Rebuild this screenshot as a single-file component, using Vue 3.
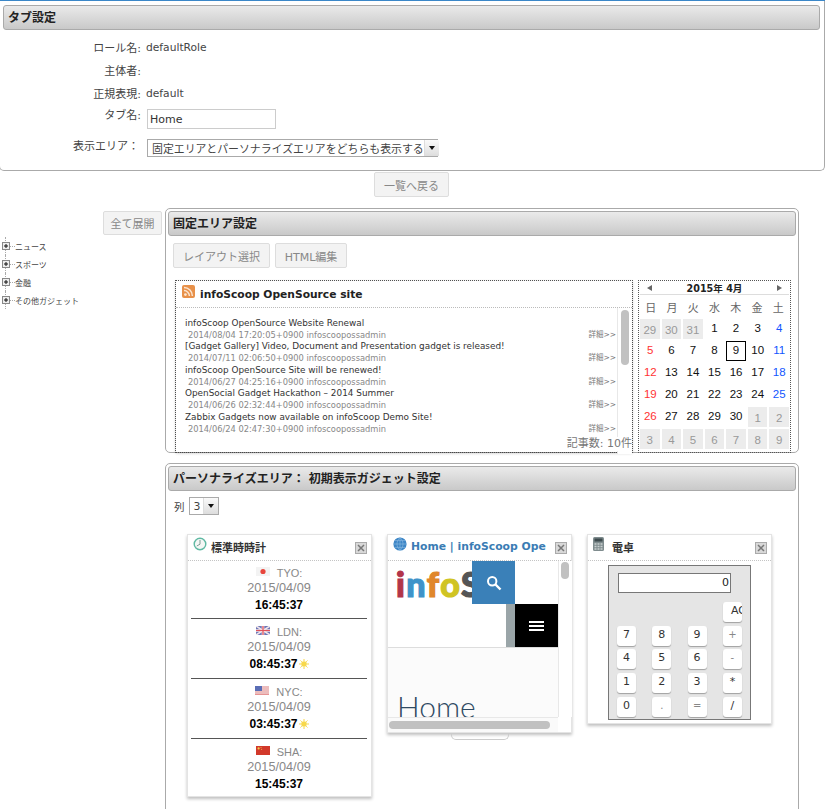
<script setup>
const treeItems = ['ニュース', 'スポーツ', '金融', 'その他ガジェット']

const feeds = [
  { title: 'infoScoop OpenSource Website Renewal', meta: '2014/08/04 17:20:05+0900 infoscoopossadmin' },
  { title: '[Gadget Gallery] Video, Document and Presentation gadget is released!', meta: '2014/07/11 02:06:50+0900 infoscoopossadmin' },
  { title: 'infoScoop OpenSource Site will be renewed!', meta: '2014/06/27 04:25:16+0900 infoscoopossadmin' },
  { title: 'OpenSocial Gadget Hackathon – 2014 Summer', meta: '2014/06/26 02:32:44+0900 infoscoopossadmin' },
  { title: 'Zabbix Gadgets now available on infoScoop Demo Site!', meta: '2014/06/24 02:47:30+0900 infoscoopossadmin' }
]

const weekdays = ['日', '月', '火', '水', '木', '金', '土']
const days = [
  [29, 'o'], [30, 'o'], [31, 'o'], [1, ''], [2, ''], [3, ''], [4, 'sat'],
  [5, 'sun'], [6, ''], [7, ''], [8, ''], [9, 'today'], [10, ''], [11, 'sat'],
  [12, 'sun'], [13, ''], [14, ''], [15, ''], [16, ''], [17, ''], [18, 'sat'],
  [19, 'sun'], [20, ''], [21, ''], [22, ''], [23, ''], [24, ''], [25, 'sat'],
  [26, 'sun'], [27, ''], [28, ''], [29, ''], [30, ''], [1, 'o'], [2, 'o'],
  [3, 'o'], [4, 'o'], [5, 'o'], [6, 'o'], [7, 'o'], [8, 'o'], [9, 'o']
]

const clocks = [
  { city: 'TYO', flag: 'jp', time: '16:45:37', sun: false },
  { city: 'LDN', flag: 'uk', time: '08:45:37', sun: true },
  { city: 'NYC', flag: 'us', time: '03:45:37', sun: true },
  { city: 'SHA', flag: 'cn', time: '15:45:37', sun: false }
]

const calcKeys = ['7', '8', '9', '+', '4', '5', '6', '-', '1', '2', '3', '*', '0', '.', '=', '/']
const softKeys = ['+', '-', '.', '=']
</script>

<template>
  <div class="page">
    <!-- tab settings -->
    <section class="settings">
      <h2 class="bar">タブ設定</h2>
      <div class="form">
        <label>ロール名:</label><span class="val">defaultRole</span>
        <label>主体者:</label><span class="val"></span>
        <label>正規表現:</label><span class="val">default</span>
        <label class="lbl-tab">タブ名:</label><input class="tabname" value="Home" />
        <label class="lbl-area">表示エリア：</label>
        <div class="select wide">
          <span>固定エリアとパーソナライズエリアをどちらも表示する</span>
          <i class="arrow"></i>
        </div>
      </div>
    </section>

    <div class="back"><button class="btn back-btn">一覧へ戻る</button></div>

    <div class="main">
      <aside class="side">
        <div class="expand"><button class="btn expand-btn">全て展開</button></div>
        <ul class="tree">
          <li v-for="item in treeItems" :key="item">
            <svg width="8" height="8" viewBox="0 0 8 8">
              <rect x=".5" y=".5" width="7" height="7" fill="#eee" stroke="#888" />
              <path d="M2 4h4M4 2v4" stroke="#111" />
            </svg>
            <i class="dots"></i>{{ item }}
          </li>
        </ul>
      </aside>

      <div class="content">
        <!-- fixed area -->
        <section class="panel fixed">
          <h2 class="bar">固定エリア設定</h2>
          <div class="tools">
            <button class="btn tool1">レイアウト選択</button>
            <button class="btn tool2">HTML編集</button>
          </div>
          <div class="fixed-row">
            <div class="slot rss-slot">
              <div class="gadget rss">
                <div class="rss-head">
                  <svg class="rss-icon" width="13" height="13" viewBox="0 0 13 13">
                    <rect width="13" height="13" rx="2" fill="#e8914a" />
                    <circle cx="3.4" cy="9.6" r="1.4" fill="#fbe6d2" />
                    <path d="M2 5.6a5.4 5.4 0 0 1 5.4 5.4M2 2.6a8.4 8.4 0 0 1 8.4 8.4" fill="none" stroke="#fbe6d2" stroke-width="1.5" />
                  </svg>
                  <span>infoScoop OpenSource site</span>
                </div>
                <div class="rss-body">
                  <ul class="feeds">
                    <li v-for="f in feeds" :key="f.meta">
                      <div class="f-title">{{ f.title }}</div>
                      <div class="f-meta"><span>{{ f.meta }}</span><span class="more">詳細&gt;&gt;</span></div>
                    </li>
                  </ul>
                  <div class="vscroll"><b class="thumb"></b></div>
                  <div class="count">記事数: 10件</div>
                </div>
              </div>
            </div>
            <div class="slot cal-slot">
              <div class="cal-head">
                <i class="tri left"></i><span>2015年 4月</span><i class="tri right"></i>
              </div>
              <div class="cal-week">
                <span v-for="w in weekdays" :key="w">{{ w }}</span>
              </div>
              <div class="cal-grid">
                <span v-for="(d, i) in days" :key="i" class="day" :class="d[1]">{{ d[0] }}</span>
              </div>
            </div>
          </div>
        </section>

        <!-- personalize area -->
        <section class="panel personal">
          <h2 class="bar">パーソナライズエリア： 初期表示ガジェット設定</h2>
          <div class="cols">
            <span>列</span>
            <div class="select small"><span>3</span><i class="arrow"></i></div>
          </div>
          <div class="gadgets">
            <!-- clock -->
            <div class="gadget g-card">
              <div class="g-head">
                <svg class="g-icon" width="14" height="14" viewBox="0 0 14 14">
                  <circle cx="7" cy="7" r="5.8" fill="#f4f7f5" stroke="#5fb9a3" stroke-width="1.4" />
                  <path d="M7 3v4.2L3.8 9" fill="none" stroke="#7c9c94" stroke-width="1" />
                </svg>
                <span class="g-title">標準時時計</span>
                <svg class="g-close" width="12" height="12" viewBox="0 0 12 12">
                  <rect x=".5" y=".5" width="11" height="11" fill="#d8d8d8" stroke="#aaa" />
                  <path d="M3 3l6 6M9 3l-6 6" stroke="#777" stroke-width="1.5" />
                </svg>
              </div>
              <div class="clocks">
                <div v-for="c in clocks" :key="c.city" class="clock">
                  <div class="city">
                    <svg class="flag" width="14" height="9" viewBox="0 0 14 9">
                      <template v-if="c.flag === 'jp'">
                        <rect width="14" height="9" fill="#f3f3f3" />
                        <circle cx="7" cy="4.5" r="2.6" fill="#e8453c" />
                      </template>
                      <template v-else-if="c.flag === 'uk'">
                        <rect width="14" height="9" fill="#6c77b8" />
                        <path d="M0 0l14 9M14 0L0 9" stroke="#f1e6ea" stroke-width="1.6" />
                        <path d="M7 0v9M0 4.5h14" stroke="#f6dede" stroke-width="2.6" />
                        <path d="M7 0v9M0 4.5h14" stroke="#e0505a" stroke-width="1.2" />
                      </template>
                      <template v-else-if="c.flag === 'us'">
                        <rect width="14" height="9" fill="#f3eeee" />
                        <path d="M0 1h14M0 3h14M0 5h14M0 7h14M0 8.6h14" stroke="#e58a8a" />
                        <rect width="7" height="5" fill="#5a6db5" />
                      </template>
                      <template v-else>
                        <rect width="14" height="9" fill="#d2392b" />
                        <circle cx="2.6" cy="2.4" r="1.1" fill="#f2d14a" />
                        <circle cx="5" cy="1.4" r=".5" fill="#f2d14a" />
                        <circle cx="5.6" cy="3.2" r=".5" fill="#f2d14a" />
                      </template>
                    </svg>
                    <span>{{ c.city }}:</span>
                  </div>
                  <div class="date">2015/04/09</div>
                  <div class="time">
                    {{ c.time }}<svg v-if="c.sun" class="sun" width="10" height="10" viewBox="0 0 10 10">
                      <circle cx="5" cy="5" r="2.8" fill="#f7d84a" />
                      <path d="M5 0v2M5 8v2M0 5h2M8 5h2M1.5 1.5l1.3 1.3M7.2 7.2l1.3 1.3M8.5 1.5L7.2 2.8M2.8 7.2L1.5 8.5" stroke="#f7d84a" stroke-width="1" />
                    </svg>
                  </div>
                </div>
              </div>
            </div>

            <!-- web page -->
            <div class="g-wrap">
              <div class="gadget g-card">
                <div class="g-head">
                  <svg class="g-icon" width="14" height="14" viewBox="0 0 14 14">
                    <circle cx="7" cy="7" r="6.6" fill="#3d86c6" />
                    <path d="M1 7h12M7 .6v12.8M2 3.6h10M2 10.4h10M7 .6c-4 3.6-4 9.2 0 12.8M7 .6c4 3.6 4 9.2 0 12.8" fill="none" stroke="#8fbce2" stroke-width=".6" />
                  </svg>
                  <span class="g-title link">Home | infoScoop Ope</span>
                  <svg class="g-close" width="12" height="12" viewBox="0 0 12 12">
                    <rect x=".5" y=".5" width="11" height="11" fill="#d8d8d8" stroke="#aaa" />
                    <path d="M3 3l6 6M9 3l-6 6" stroke="#777" stroke-width="1.5" />
                  </svg>
                </div>
                <div class="web">
                  <div class="web-view">
                    <div class="web-top">
                      <div class="logo"><span class="l-i">i</span><span class="l-n">n</span><span class="l-f">f</span><span class="l-o">o</span><span class="l-s">S</span></div>
                      <div class="web-btns">
                        <div class="search">
                          <svg width="16" height="16" viewBox="0 0 16 16">
                            <circle cx="6.2" cy="6.2" r="4.2" fill="none" stroke="#fff" stroke-width="2" />
                            <path d="M9.5 9.5L14.5 14.5" stroke="#fff" stroke-width="2.4" />
                          </svg>
                        </div>
                        <div class="menu-row">
                          <i class="gray"></i>
                          <div class="menu"><b></b><b></b><b></b></div>
                        </div>
                      </div>
                    </div>
                    <div class="web-title">Home</div>
                  </div>
                  <div class="web-vs"><b class="thumb"></b></div>
                  <div class="web-hs"><b></b></div>
                </div>
              </div>
              <div class="handle"></div>
            </div>

            <!-- calculator -->
            <div class="gadget g-card">
              <div class="g-head">
                <svg class="g-icon" width="11" height="14" viewBox="0 0 11 14">
                  <rect width="11" height="14" rx="1.5" fill="#7f8c8e" />
                  <rect x="1.5" y="1.5" width="8" height="3" fill="#3e4b4e" />
                  <path d="M1.5 7h8M1.5 9.5h8M1.5 12h8" stroke="#c9d0d0" stroke-width="1.3" stroke-dasharray="2 1" />
                </svg>
                <span class="g-title calc-title">電卓</span>
                <svg class="g-close" width="12" height="12" viewBox="0 0 12 12">
                  <rect x=".5" y=".5" width="11" height="11" fill="#d8d8d8" stroke="#aaa" />
                  <path d="M3 3l6 6M9 3l-6 6" stroke="#777" stroke-width="1.5" />
                </svg>
              </div>
              <div class="calc-body">
                <div class="calc">
                  <div class="display">0</div>
                  <div class="keys">
                    <span class="key ac">AC</span>
                    <span v-for="k in calcKeys" :key="k" class="key" :class="{ soft: softKeys.includes(k) }">{{ k }}</span>
                  </div>
                </div>
              </div>
            </div>
          </div>
        </section>
      </div>
    </div>
  </div>
</template>

<style>
html, body { margin: 0; background: #fff; overflow: hidden; }
</style>

<style scoped>
.page {
  height: 809px;
  overflow: hidden;
  box-sizing: border-box;
  border-top: 1px solid #3b87c8;
  font-family: "DejaVu Sans", "Noto Sans CJK JP", sans-serif;
  font-size: 11px;
  color: #333;
}
.bar {
  margin: 0;
  height: 25px;
  box-sizing: border-box;
  padding-left: 4px;
  line-height: 24px;
  font-size: 12px;
  font-weight: bold;
  color: #222;
  border: 1px solid #aaa;
  border-radius: 3px;
  background: linear-gradient(#eaeaea, #c9c9c9);
}
.settings {
  height: 170px;
  box-sizing: border-box;
  padding: 4px 4px 0 3px;
  margin-left: -1px;
  border: 1px solid #aaa;
  border-top: 0;
  border-radius: 0 0 5px 5px;
}
.form {
  display: grid;
  grid-template-columns: 138px 1fr;
  column-gap: 5px;
  grid-template-rows: 23px 23px 23px 28px 30px;
  padding-top: 7px;
  color: #444;
}
.form label { text-align: right; line-height: 24px; }
.form .lbl-tab { line-height: 20px; }
.val { line-height: 22px; font-size: 10.7px; }
.form .lbl-area { padding-right: 2px; line-height: 25px; }
.tabname {
  width: 129px;
  height: 20px;
  box-sizing: border-box;
  margin: 3px 0 0 1px;
  padding: 1px 2px;
  border: 1px solid #ccc;
  font: inherit;
  color: #333;
}
.select {
  display: inline-flex;
  align-items: center;
  box-sizing: border-box;
  height: 18px;
  border: 1px solid #aaa;
  background: #fff;
  font-size: 10.9px;
  color: #444;
  white-space: nowrap;
}
.select.wide { width: 291px; margin: 5px 0 0 1px; padding-left: 4px; justify-content: space-between; }
.select .arrow {
  flex: none;
  width: 14px;
  height: 100%;
  border-left: 1px solid #ddd;
  background: linear-gradient(#fafafa, #ddd);
  position: relative;
}
.select .arrow::after {
  content: "";
  position: absolute;
  left: 4px;
  top: 6px;
  border: 3px solid transparent;
  border-top: 4px solid #111;
  border-bottom: 0;
}
.btn {
  box-sizing: border-box;
  border: 1px solid #ddd;
  border-radius: 2px;
  background: #f3f3f3;
  color: #888;
  font: inherit;
  padding: 0;
}
.back { display: flex; justify-content: center; padding-top: 1px; }
.back-btn { width: 75px; height: 25px; margin-right: 2px; }
.main { display: flex; padding-top: 11px; }
.side { width: 165px; flex: none; }
.expand { display: flex; justify-content: flex-end; padding-right: 3px; padding-top: 3px; }
.expand-btn { width: 59px; height: 24px; }
.tree {
  list-style: none;
  margin: 2px 0 0;
  padding: 0 0 0 2px;
  font-size: 8px;
  color: #444;
}
.tree li { height: 18px; display: flex; align-items: center; position: relative; }
.tree li::before {
  content: "";
  position: absolute;
  left: 3px;
  top: 0;
  bottom: 0;
  border-left: 1px dotted #aaa;
}
.dots { width: 5px; border-top: 1px dotted #aaa; }
.tree svg { flex: none; position: relative; }
.content { width: 634px; flex: none; }
.panel {
  box-sizing: border-box;
  border: 1px solid #aaa;
  border-radius: 5px;
  padding: 2px 2px 0;
}
.fixed { height: 245px; }
.tools { display: flex; gap: 5px; padding: 7px 0 0 5px; }
.tool1 { width: 97px; height: 25px; }
.tool2 { width: 72px; height: 25px; }
.fixed-row { display: flex; gap: 5px; padding: 12px 0 0 7px; }
.slot { border: 1px dotted #555; box-sizing: border-box; height: 173px; }
.rss-slot { width: 458px; }
.cal-slot { width: 153px; padding: 0 1px; }
.gadget { background: #fff; }
.rss { height: 100%; box-shadow: 0 1px 3px rgba(0, 0, 0, .25); }
.rss-head {
  height: 26px;
  display: flex;
  align-items: center;
  gap: 5px;
  padding-left: 6px;
  border-bottom: 1px dotted #bbb;
  font-size: 10.7px;
  font-weight: bold;
  color: #222;
}
.rss-icon { margin-top: -6px; }
.rss-body { position: relative; height: 146px; overflow: hidden; }
.feeds { list-style: none; margin: 0; padding: 9px 16px 0 9px; }
.feeds li { height: 23.4px; }
.f-title { font-size: 8.9px; line-height: 13px; color: #333; white-space: nowrap; }
.f-meta {
  display: flex;
  justify-content: space-between;
  padding-left: 3px;
  font-size: 8.3px;
  line-height: 10px;
  color: #888;
}
.more { font-size: 7.5px; color: #777; }
.vscroll {
  position: absolute;
  top: 0;
  right: 0;
  bottom: 0;
  width: 14px;
  background: #fff;
  border-left: 1px solid #e8e8e8;
}
.thumb { display: block; width: 8px; height: 55px; margin: 2px 3px; border-radius: 4px; background: #c1c1c1; }
.count {
  position: absolute;
  right: 0;
  bottom: 3px;
  line-height: 14px;
  font-size: 11px;
  color: #777;
  background: #fff;
}
.cal-head {
  height: 13px;
  display: flex;
  align-items: center;
  justify-content: space-between;
  padding: 0 7px;
  font-size: 9.6px;
  font-weight: bold;
  color: #222;
  border-bottom: 1px solid #ddd;
}
.tri { border: 3.5px solid transparent; border-left: 0; border-right: 5px solid #666; }
.tri.right { border-right: 0; border-left: 5px solid #666; }
.cal-week {
  height: 24px;
  display: grid;
  grid-template-columns: repeat(7, 1fr);
  align-items: center;
  text-align: center;
  font-size: 11px;
  color: #666;
}
.cal-grid {
  display: grid;
  grid-template-columns: repeat(7, 1fr);
  grid-auto-rows: 20px;
  gap: 2px;
  font-family: "Liberation Sans", sans-serif;
  font-size: 11.5px;
  color: #111;
}
.day { background: #fff; text-align: center; line-height: 18px; box-sizing: border-box; }
.day.o { background: #ececec; color: #999; line-height: 22px; }
.day.sun { color: #f33; }
.day.sat { color: #15f; }
.day.today { border: 1px solid #000; line-height: 16px; }
.personal { margin-top: 10px; height: 360px; }
.cols { display: flex; align-items: center; gap: 4px; padding: 6px 0 0 6px; font-size: 10.5px; color: #444; }
.select.small { width: 30px; height: 18px; padding-left: 4px; justify-content: space-between; }
.gadgets { display: flex; align-items: flex-start; gap: 15px; padding: 19px 0 0 19px; }
.g-wrap { position: relative; }
.g-card { width: 185px; flex: none; box-sizing: border-box; border: 1px solid #e4e4e4; box-shadow: 0 2px 3px rgba(0, 0, 0, .25); }
.g-head { height: 25px; display: flex; align-items: center; padding: 0 4px 0 5px; border-bottom: 1px dotted #c4c4c4; position: relative; }
.g-icon { margin-top: -7px; flex: none; }
.g-title { margin: -2px 0 0 4px; flex: 1; font-size: 11px; font-weight: bold; color: #333; white-space: nowrap; overflow: hidden; }
.g-title.link { font-size: 10.8px; color: #3a7cb4; }
.g-title.calc-title { margin-left: 8px; }
.g-close { flex: none; }
.clocks { padding: 0 4px 0 3px; }
.clock {
  height: 60px;
  box-sizing: border-box;
  border-bottom: 1px solid #555;
  text-align: center;
  font-family: "Liberation Sans", sans-serif;
  font-size: 12px;
  line-height: 16px;
  color: #888;
  padding-top: 5px;
}
.clock:first-child { height: 58px; padding-top: 4px; }
.clock:last-child { border-bottom: 0; height: 57px; }
.city { display: flex; justify-content: center; align-items: center; gap: 7px; height: 15px; font-size: 11px; }
.flag { margin-top: -2px; }
.date { font-size: 12.7px; height: 17px; }
.time { color: #000; font-weight: bold; height: 16px; }
.sun { vertical-align: -1px; margin-left: 1px; }
.web { display: grid; grid-template-columns: 170px 14px; grid-template-rows: 156px 15px; height: 171px; }
.web-view { overflow: hidden; background: #fbfbfb; }
.web-top {
  display: flex;
  height: 86px;
  background: #fff;
  border-bottom: 1px solid #ddd;
  justify-content: space-between;
}
.logo {
  width: 84px;
  overflow: hidden;
  padding: 1px 0 0 8px;
  box-sizing: border-box;
  font-family: "Lato", sans-serif;
  font-weight: 900;
  font-size: 34px;
  line-height: 44px;
  letter-spacing: 1.5px;
  -webkit-text-stroke: 1.2px currentColor;
  white-space: nowrap;
}
.l-i { color: #b2344a; }
.l-n { color: #3f93c9; }
.l-f { color: #e0872d; }
.l-o { color: #d0c423; }
.l-s { color: #555; }
.web-btns { width: 86px; display: flex; flex-direction: column; }
.search { width: 43px; height: 43px; background: #3a80b8; display: flex; align-items: center; justify-content: center; }
.menu-row { display: flex; justify-content: flex-end; height: 43px; }
.gray { width: 9px; background: #9aa5a8; }
.menu { width: 43px; background: #000; display: flex; flex-direction: column; align-items: center; justify-content: center; gap: 2px; }
.menu b { width: 15px; height: 2px; background: #fff; }
.web-title {
  padding: 39px 0 0 9px;
  font-family: "Lato", sans-serif;
  font-weight: 300;
  font-size: 30px;
  line-height: 38px;
  color: #2f4a63;
}
.web-vs { background: #fff; border-left: 1px solid #e8e8e8; }
.web-vs .thumb { height: 17px; margin: 1px 2px; }
.web-hs { background: #fafafa; border-top: 1px solid #e8e8e8; padding: 3px 1px; grid-column: 1; }
.web-hs b { display: block; width: 161px; height: 8px; border-radius: 4px; background: #c1c1c1; }
.handle {
  position: absolute;
  left: 64px;
  bottom: -7px;
  width: 58px;
  height: 6px;
  box-sizing: border-box;
  border: 1px solid #ccc;
  border-top: 0;
  border-radius: 0 0 5px 5px;
}
.calc-body { padding: 4px 0 0 20px; height: 158px; }
.calc {
  width: 143px;
  height: 155px;
  box-sizing: border-box;
  background: #e5e5e5;
  border: 1px solid #777;
  padding: 7px 0 0 9px;
  overflow: hidden;
}
.display {
  width: 113px;
  height: 20px;
  box-sizing: border-box;
  background: #fff;
  border: 1px solid #777;
  text-align: right;
  line-height: 18px;
  font-size: 11px;
  color: #222;
  padding-right: 1px;
}
.keys {
  display: grid;
  grid-template-columns: repeat(4, 19px);
  grid-auto-rows: 20px;
  column-gap: 16.3px;
  row-gap: 3.7px;
  margin-top: 9px;
  margin-left: -1px;
}
.key {
  background: #fff;
  border-radius: 3px;
  box-shadow: 0 1px 1px rgba(0, 0, 0, .3);
  font-size: 11px;
  line-height: 18px;
  text-align: center;
  color: #333;
  overflow: hidden;
  white-space: nowrap;
}
.key.soft { color: #888; font-size: 10px; }
.key.ac { grid-column: 4; text-align: left; padding-left: 8px; box-sizing: border-box; }
</style>
